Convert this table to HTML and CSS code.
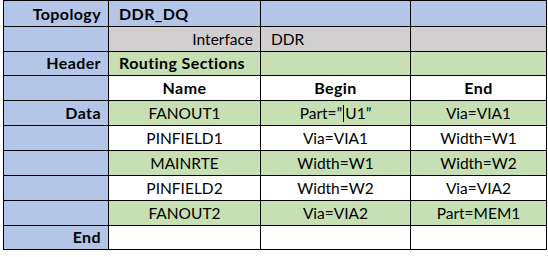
FILE: index.html
```html
<!DOCTYPE html>
<html>
<head>
<meta charset="utf-8">
<link rel="stylesheet" href="styles.css">
</head>
<body>
<div class="sheet">
  <div class="c blue lbl">Topology</div>
  <div class="c blue left b">DDR_DQ</div>
  <div class="c blue"></div>
  <div class="c blue"></div>

  <div class="c blue"></div>
  <div class="c gray right">Interface</div>
  <div class="c gray left">DDR</div>
  <div class="c gray"></div>

  <div class="c blue lbl">Header</div>
  <div class="c green left b">Routing Sections</div>
  <div class="c green"></div>
  <div class="c green"></div>

  <div class="c blue"></div>
  <div class="c white mid b">Name</div>
  <div class="c white mid b">Begin</div>
  <div class="c white mid b">End</div>

  <div class="c blue lbl">Data</div>
  <div class="c green mid">FANOUT1</div>
  <div class="c green mid">Part=”<span class="caret"></span>U1”</div>
  <div class="c green mid">Via=VIA1</div>

  <div class="c blue"></div>
  <div class="c white mid">PINFIELD1</div>
  <div class="c white mid">Via=VIA1</div>
  <div class="c white mid">Width=W1</div>

  <div class="c blue"></div>
  <div class="c green mid">MAINRTE</div>
  <div class="c green mid">Width=W1</div>
  <div class="c green mid">Width=W2</div>

  <div class="c blue"></div>
  <div class="c white mid">PINFIELD2</div>
  <div class="c white mid">Width=W2</div>
  <div class="c white mid">Via=VIA2</div>

  <div class="c blue"></div>
  <div class="c green mid">FANOUT2</div>
  <div class="c green mid">Via=VIA2</div>
  <div class="c green mid">Part=MEM1</div>

  <div class="c blue lbl">End</div>
  <div class="c white"></div>
  <div class="c white"></div>
  <div class="c white"></div>
</div>
</body>
</html>
```

FILE: styles.css
```css
html, body {
  margin: 0;
  padding: 0;
  background: #ffffff;
}

.sheet {
  margin-left: 3px;
  width: 544px;
  display: grid;
  grid-template-columns: 104px 151px 149px 135px;
  grid-template-rows: 25px 24px 23px 24px 24px 24px 24px 24px 24px 23px;
  gap: 1px;
  padding: 1px;
  box-sizing: border-box;
  background: #000000;
  font-family: Lato, "Open Sans", sans-serif;
  font-size: 15.5px;
  color: #000000;
}

.c {
  display: flex;
  align-items: flex-end;
  padding-bottom: 3px;
  line-height: 18px;
  box-sizing: border-box;
  white-space: nowrap;
  overflow: hidden;
}

.blue { background: #b4c6e7; }
.gray { background: #d0cece; }
.green { background: #c6e0b4; }
.white { background: #ffffff; }

.b {
  font-weight: 700;
  font-size: 16px;
  letter-spacing: 0.4px;
}

.lbl {
  font-weight: 700;
  font-size: 16px;
  letter-spacing: 0.4px;
  justify-content: flex-end;
  padding-right: 7px;
}

.left {
  justify-content: flex-start;
  padding-left: 10px;
}

.right {
  justify-content: flex-end;
  padding-right: 7px;
}

.mid {
  justify-content: center;
}

.caret {
  display: inline-block;
  width: 1px;
  height: 17px;
  background: #000000;
  margin: 0 1px;
  vertical-align: bottom;
}
```
